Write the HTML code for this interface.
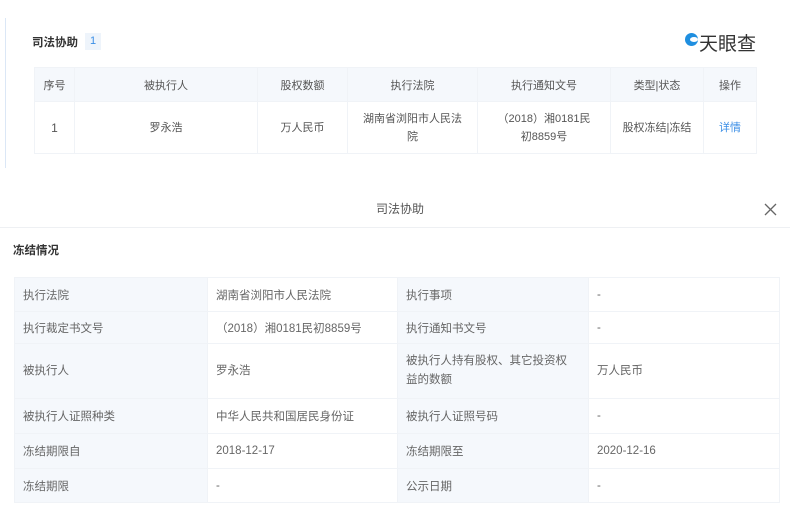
<!DOCTYPE html>
<html><head><meta charset="utf-8"><style>
*{margin:0;padding:0;box-sizing:border-box}
body{width:800px;height:520px;background:#fff;font-family:"Liberation Sans","Noto Sans CJK SC",sans-serif;color:#555;font-size:11px;position:relative;overflow:hidden}
.a{position:absolute}
table{border-collapse:collapse;position:absolute}
td{border:1px solid #f0f3f7;text-align:center;vertical-align:middle}
.t1 td{color:#555}
.t2 td{text-align:left;padding-left:8px;color:#666;font-size:11.5px}
.l{background:#f5f8fc}
</style></head><body>
<div class="a" style="left:5px;top:18px;width:1px;height:150px;background:#dbe7f6"></div>
<div class="a" style="left:32px;top:34px;font-size:11.5px;font-weight:bold;color:#333">司法协助</div>
<div class="a" style="left:85px;top:33px;width:16px;height:17px;background:#eef4fb;color:#3a8ee6;font-size:11px;text-align:center;line-height:17px">1</div>
<div class="a" style="left:685px;top:33px;width:13px;height:13px;border-radius:50%;background:#1f8fe0"></div>
<div class="a" style="left:690px;top:37px;width:8px;height:5px;border-radius:50%;background:#fff"></div>
<div class="a" style="left:699px;top:29px;font-size:19px;color:#333">天眼查</div>
<table class="t1" style="left:34px;top:67px;width:723px">
<tr style="height:34px;background:#f5f8fc"><td style="width:40px">序号</td><td style="width:183px">被执行人</td><td style="width:90px">股权数额</td><td style="width:130px">执行法院</td><td style="width:133px">执行通知文号</td><td style="width:93px">类型|状态</td><td>操作</td></tr>
<tr style="height:52px;line-height:18px"><td style="font-size:12px">1</td><td>罗永浩</td><td>万人民币</td><td>湖南省浏阳市人民法<br>院</td><td>（2018）湘0181民<br>初8859号</td><td>股权冻结|冻结</td><td style="color:#3a8ee6">详情</td></tr>
</table>
<div class="a" style="left:0;top:200px;width:800px;text-align:center;font-size:12px;color:#555">司法协助</div>
<svg class="a" style="left:764px;top:203px" width="13" height="13" viewBox="0 0 13 13"><path d="M1 1L12 12M12 1L1 12" stroke="#666" stroke-width="1.3"/></svg>
<div class="a" style="left:0;top:227px;width:790px;height:1px;background:#eef0f3"></div>
<div class="a" style="left:13px;top:242px;font-size:11.5px;font-weight:bold;color:#333">冻结情况</div>
<table class="t2" style="left:14px;top:277px;width:766px">
<tr style="height:34px"><td class="l" style="width:193px">执行法院</td><td style="width:190px">湖南省浏阳市人民法院</td><td class="l" style="width:191px">执行事项</td><td>-</td></tr>
<tr style="height:32px"><td class="l">执行裁定书文号</td><td>（2018）湘0181民初8859号</td><td class="l">执行通知书文号</td><td>-</td></tr>
<tr style="height:55px;line-height:19px"><td class="l">被执行人</td><td>罗永浩</td><td class="l">被执行人持有股权、其它投资权<br>益的数额</td><td>万人民币</td></tr>
<tr style="height:35px"><td class="l">被执行人证照种类</td><td>中华人民共和国居民身份证</td><td class="l">被执行人证照号码</td><td>-</td></tr>
<tr style="height:35px"><td class="l">冻结期限自</td><td>2018-12-17</td><td class="l">冻结期限至</td><td>2020-12-16</td></tr>
<tr style="height:34px"><td class="l">冻结期限</td><td>-</td><td class="l">公示日期</td><td>-</td></tr>
</table>
</body></html>
